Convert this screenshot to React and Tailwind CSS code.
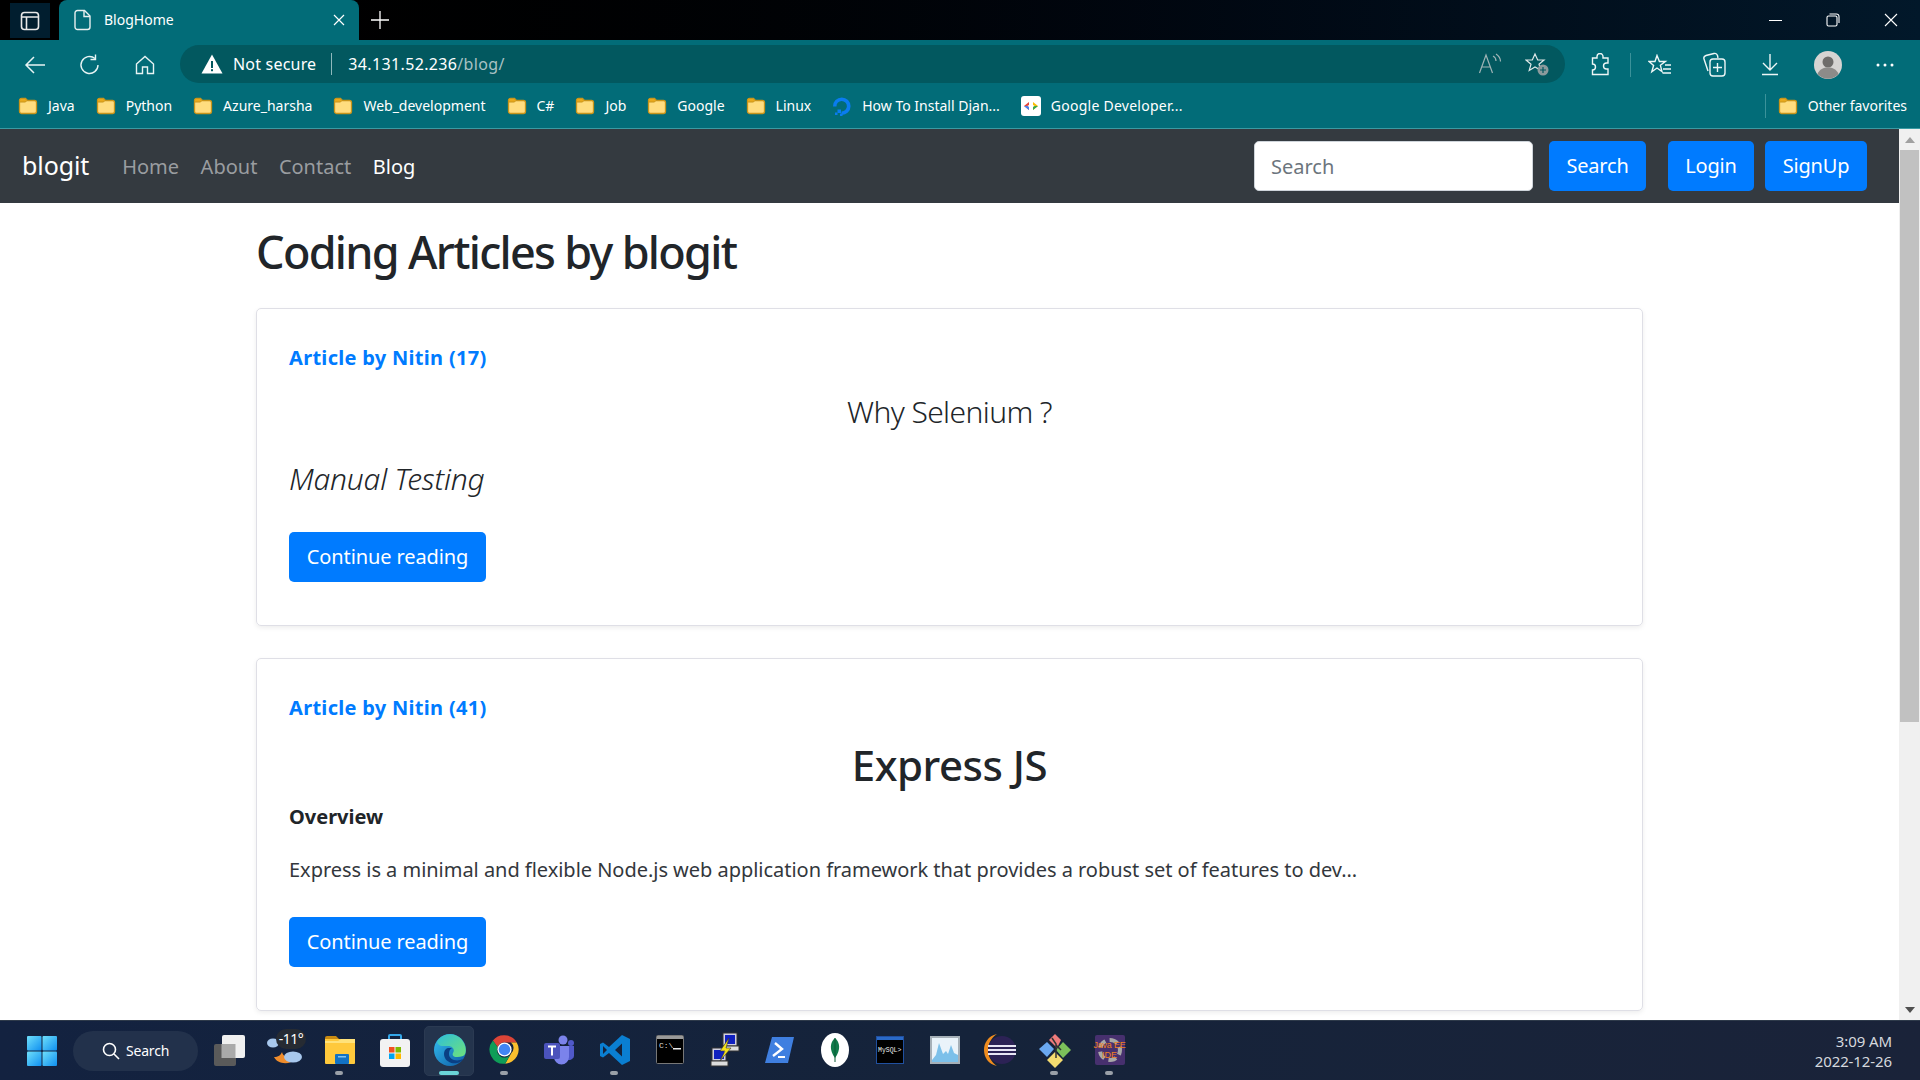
import React from "react";

const Folder = () => (
  <svg width="20" height="20" viewBox="0 0 20 20" className="shrink-0">
    <path d="M1.5 4.5a2 2 0 0 1 2-2h4l2 2h7a2 2 0 0 1 2 2v9a2 2 0 0 1-2 2h-13a2 2 0 0 1-2-2z" fill="#ffdd7f" stroke="#c8941a" strokeWidth="1.3" />
    <path d="M1.5 6V4a1.5 1.5 0 0 1 1.5-1.5h4l2 2-1.5 1.5z" fill="#e9a91c" stroke="#c8941a" strokeWidth="1" />
  </svg>
);

const Bm = ({ icon, children, t }) => (
  <div className="flex items-center gap-[10px] shrink-0">
    {icon || <Folder />}
    <span className={`text-[14px] leading-none text-white ${t || ""}`}>{children}</span>
  </div>
);

const Do = () => (
  <svg width="20" height="22" viewBox="0 0 20 22" className="shrink-0">
    <path d="M8 19.5v-3.6a5.2 5.2 0 1 0-5-5H-0.5A8.8 8.8 0 1 1 8 19.5z" transform="translate(1.5 0.5)" fill="#0a7cf0" />
    <rect x="5.5" y="14.5" width="3.5" height="3.5" fill="#0a7cf0" />
    <rect x="3" y="17.5" width="2.5" height="2.5" fill="#0a7cf0" />
    <rect x="8" y="18.5" width="2.5" height="2.5" fill="#0a7cf0" />
  </svg>
);

const Gd = () => (
  <svg width="20" height="24" viewBox="0 0 20 24" className="shrink-0">
    <rect y="2" width="20" height="20" rx="3" fill="#fff" />
    <path d="M8 8l-5 4 5 4v-3l-1.8-1L8 11z" fill="#e34336" />
    <path d="M3 12l5 4v-3l-1.8-1z" fill="#4285f4" />
    <path d="M12 8l5 4-5 4v-3l1.8-1L12 11z" fill="#fbbc04" />
    <path d="M17 12l-5 4v-3l1.8-1z" fill="#34a853" />
  </svg>
);

const Ico = ({ w = "w-[55px]", children }) => (
  <div className={`${w} h-[40px] flex items-center justify-center shrink-0`}>{children}</div>
);

const Task = ({ children, dot, active }) => (
  <div className="relative w-[55px] h-[60px] flex items-center justify-center shrink-0">
    {active && <div className="absolute left-[2px] top-[5px] w-[50px] h-[50px] rounded-[5px] bg-[#24344d] border border-[#2b3a52]" />}
    <div className="relative flex items-center justify-center -mt-[2px]">{children}</div>
    {dot && <div className="absolute left-[23px] top-[50px] w-[8px] h-[4px] rounded-full bg-[#9aa0a8]" />}
    {active && <div className="absolute left-[17px] top-[50px] w-[20px] h-[4px] rounded-full bg-[#6ad4d8]" />}
  </div>
);

const Card = ({ title, children, h }) => (
  <div className={`border border-[#dfdfe6] rounded-[5px] shadow-[0_2px_5px_rgba(0,0,0,0.07)] px-[32px] ${h}`}>
    <div className="pt-[34px] text-[20px] leading-[30px] font-bold text-[#007bff] tracking-[0.3px]">{title}</div>
    {children}
  </div>
);

const Btn = ({ children, cls }) => (
  <div className={`h-[50px] flex items-center justify-center rounded-[5px] bg-[#007bff] text-white text-[20px] ${cls}`}>{children}</div>
);

export default function App() {
  return (
    <div className="w-[1920px] h-[1080px] flex flex-col overflow-hidden bg-white font-['Noto_Sans',sans-serif]">
      {/* tab strip */}
      <div className="h-[40px] flex bg-gradient-to-r from-[#000000] to-[#02182a] shrink-0">
        <div className="ml-[10px] mt-[3px] w-[40px] h-[35px] bg-[#011e2f] flex items-center justify-center">
          <svg width="20" height="20" viewBox="0 0 20 20" fill="none" stroke="#e8e8e8" strokeWidth="1.6">
            <rect x="1.5" y="1.5" width="17" height="17" rx="3" />
            <path d="M1.5 6h17M6.5 6v12.5" />
          </svg>
        </div>
        <div className="ml-[9px] w-[300px] h-[40px] bg-[#026c78] rounded-t-[8px] flex items-center pl-[15px] pr-[14px]">
          <svg width="18" height="22" viewBox="0 0 18 22" fill="none" stroke="#e8f0f0" strokeWidth="1.4">
            <path d="M3.5 1.5h7l5.5 5.5v11a2.5 2.5 0 0 1-2.5 2.5h-10A2.5 2.5 0 0 1 1 18V4a2.5 2.5 0 0 1 2.5-2.5z" />
            <path d="M10 1.5V7.5h6" />
          </svg>
          <span className="ml-[12px] -mt-[2px] text-[14px] text-white flex-1">BlogHome</span>
          <svg width="12" height="12" viewBox="0 0 12 12" stroke="#fff" strokeWidth="1.2"><path d="M1 1l10 10M11 1L1 11" /></svg>
        </div>
        <div className="ml-[12px] flex items-center">
          <svg width="18" height="18" viewBox="0 0 18 18" stroke="#fff" strokeWidth="1.3"><path d="M9 0v18M0 9h18" /></svg>
        </div>
        <div className="ml-auto flex items-center text-white">
          <div className="w-[58px] flex justify-center"><div className="w-[13px] h-px bg-white" /></div>
          <div className="w-[58px] flex justify-center">
            <svg width="14" height="14" viewBox="0 0 14 14" fill="none" stroke="#fff" strokeWidth="1.1"><rect x="1" y="3" width="10" height="10" rx="1.5" /><path d="M3.5 1h7a2.5 2.5 0 0 1 2.5 2.5V10" /></svg>
          </div>
          <div className="w-[58px] flex justify-center">
            <svg width="14" height="14" viewBox="0 0 14 14" stroke="#fff" strokeWidth="1.1"><path d="M1 1l12 12M13 1L1 13" /></svg>
          </div>
        </div>
      </div>

      {/* toolbar */}
      <div className="h-[48px] bg-[#026c78] flex items-start shrink-0">
        <div className="pt-[5px] flex items-center">
          <Ico w="w-[62px] pl-[7px]">
            <svg width="22" height="20" viewBox="0 0 22 20" fill="none" stroke="#e8f4f4" strokeWidth="1.5"><path d="M21 10H2M10 2l-8 8 8 8" /></svg>
          </Ico>
          <Ico>
            <svg width="22" height="22" viewBox="0 0 22 22" fill="none" stroke="#e8f4f4" strokeWidth="1.4"><path d="M19 11a8.5 8.5 0 1 1-3-6.5" /><path d="M16.5 0.5v5h-5" /></svg>
          </Ico>
          <Ico>
            <svg width="20" height="20" viewBox="0 0 20 20" fill="none" stroke="#e8f4f4" strokeWidth="1.4"><path d="M1.5 9L10 1.5 18.5 9v9.5H12.5V12h-5v6.5H1.5z" /></svg>
          </Ico>
        </div>
        <div className="ml-[8px] mt-[5px] w-[1385px] h-[38px] rounded-full bg-[#02585f] flex items-center pl-[21px] shrink-0">
          <svg width="22" height="20" viewBox="0 0 22 20"><path d="M11 0.5L21.5 19.5H0.5z" fill="#fff" /><rect x="10" y="7" width="2" height="7" fill="#02585f" /><rect x="10" y="15.2" width="2" height="2" fill="#02585f" /></svg>
          <span className="ml-[10px] text-[16px] tracking-[0.2px] text-white">Not secure</span>
          <div className="ml-[15px] w-px h-[22px] bg-[#8fb9bc]" />
          <span className="ml-[16px] text-[16px] tracking-[0.35px] text-white">34.131.52.236<span className="text-[#a9c2c4]">/blog/</span></span>
          <div className="ml-auto flex items-center pr-[5px]">
            <Ico w="w-[45px]">
              <svg width="26" height="22" viewBox="0 0 26 22" fill="none" stroke="#9fb4b6" strokeWidth="1.2"><path d="M1.5 20L8 2l6.5 18M4 14h8" /><path d="M15 3c2 1 3 3 3 5M18 1c3 2 4.5 4.5 4.5 7.5" /></svg>
            </Ico>
            <Ico w="w-[47px]">
              <svg width="24" height="24" viewBox="0 0 24 24" fill="none" stroke="#dfe8e8" strokeWidth="1.2"><path d="M10 2l2.7 6h6.3l-5 4.2 1.8 6L10 15l-5.800 3.500 1.800-6.300-5-4.200h6.300z" /><circle cx="18" cy="18" r="5.500" fill="#8b9a9c" stroke="none" /><path d="M18 15v6M15 18h6" stroke="#02585f" /></svg>
            </Ico>
          </div>
        </div>
        <div className="pt-[5px] flex items-center">
          <Ico w="w-[70px]">
            <svg width="22" height="24" viewBox="0 0 22 24" fill="none" stroke="#eef6f6" strokeWidth="1.4"><path d="M8 3.500a3 3 0 0 1 6 0V5h5v5h-1.500a3 3 0 0 0 0 6H19v5.500H3.500V17a3 3 0 0 0 0-6V5H8z" /></svg>
          </Ico>
          <div className="w-px h-[24px] bg-[#3b929a] -ml-[5px]" />
          <Ico w="w-[58px]">
            <svg width="24" height="22" viewBox="0 0 24 22" fill="none" stroke="#eef6f6" strokeWidth="1.4"><path d="M9 1.500l2.400 6h6l-5 3.800 1.600 6.200L9 14l-5.200 3.800 1.800-6.300-4.600-4h6z" /><path d="M17 11h6M15 15h8M14.500 19h8.500" /></svg>
          </Ico>
          <Ico w="w-[52px]">
            <svg width="24" height="26" viewBox="0 0 24 26" fill="none" stroke="#eef6f6" strokeWidth="1.4"><path d="M5 19L1 7c-.5-1.500.5-3 2-3.500L11 1.500c1.500-.4 3 .4 3.500 2L15 6" /><rect x="7" y="7" width="15" height="17" rx="3" /><path d="M14.500 11v9M10 15.500h9" /></svg>
          </Ico>
          <Ico w="w-[58px]">
            <svg width="18" height="22" viewBox="0 0 18 22" fill="none" stroke="#eef6f6" strokeWidth="1.4"><path d="M9 0v16M2 9l7 7 7-7M1 20.500h16" /></svg>
          </Ico>
          <Ico w="w-[58px]">
            <svg width="28" height="28" viewBox="0 0 28 28"><circle cx="14" cy="14" r="14" fill="#d6d4d2" /><circle cx="14" cy="11" r="5.500" fill="#6e6c6a" /><path d="M3.500 23c2-5 6-6.500 10.500-6.500S22.500 18 24.500 23A14 14 0 0 1 3.500 23z" fill="#8d8b89" /></svg>
          </Ico>
          <Ico w="w-[56px]">
            <svg width="18" height="4" viewBox="0 0 18 4" fill="#fff"><circle cx="2" cy="2" r="1.500" /><circle cx="9" cy="2" r="1.500" /><circle cx="16" cy="2" r="1.500" /></svg>
          </Ico>
        </div>
      </div>

      {/* bookmarks */}
      <div className="h-[41px] bg-[#026c78] flex items-center pl-[18px] pr-[13px] gap-[21px] pb-[4px] border-b border-[#3a9aa3] shrink-0">
        <Bm>Java</Bm>
        <Bm>Python</Bm>
        <Bm>Azure_harsha</Bm>
        <Bm>Web_development</Bm>
        <Bm>C#</Bm>
        <Bm>Job</Bm>
        <Bm>Google</Bm>
        <Bm>Linux</Bm>
        <Bm icon={<Do />}>How To Install Djan...</Bm>
        <Bm icon={<Gd />} t="tracking-[0.25px]">Google Developer...</Bm>
        <div className="ml-auto flex items-center gap-[12px]">
          <div className="w-px h-[24px] bg-[#3b929a]" />
          <Bm>Other favorites</Bm>
        </div>
      </div>

      {/* page */}
      <div className="flex-1 flex min-h-0">
        <div className="flex-1 min-w-0 overflow-hidden">
          <nav className="h-[74px] bg-[#343a40] flex items-center pl-[22px] text-[20px]">
            <span className="text-[25px] text-white tracking-[-0.1px] mr-[33px]">blogit</span>
            <div className="flex gap-[21.5px] pt-[1px] text-[#9a9da0]">
              <span>Home</span>
              <span>About</span>
              <span>Contact</span>
              <span className="text-white">Blog</span>
            </div>
            <div className="ml-auto flex items-center pr-[32px]">
              <div className="w-[279px] h-[50px] bg-white border border-[#ced4da] rounded-[5px] flex items-center pl-[16px] pt-[2px] text-[#6c757d]">Search</div>
              <Btn cls="ml-[16px] w-[97px] tracking-[-0.2px]">Search</Btn>
              <Btn cls="ml-[22px] w-[86px] tracking-[-0.2px]">Login</Btn>
              <Btn cls="ml-[11px] w-[102px] tracking-[-0.2px]">SignUp</Btn>
            </div>
          </nav>
          <main className="pl-[256px] w-[1643px] text-[#212529]">
            <h1 className="h-[105px] flex items-center pb-[8px] text-[45px] font-medium tracking-[-1.7px] leading-none">Coding Articles by blogit</h1>
            <Card title="Article by Nitin (17)" h="h-[318px]">
              <div className="mt-[16px] h-[45px] text-center text-[30px] leading-[45px] font-light tracking-[-0.6px]">Why Selenium ?</div>
              <div className="mt-[22px] h-[45px] text-[30px] leading-[45px] italic font-light tracking-[-0.2px]">Manual Testing</div>
              <Btn cls="mt-[31px] w-[197px] tracking-[-0.1px]">Continue reading</Btn>
            </Card>
            <div className="h-[32px]" />
            <Card title="Article by Nitin (41)" h="h-[353px]">
              <div className="mt-[11px] h-[62px] flex items-center justify-center text-[42px] font-medium tracking-[-0.5px] leading-none">Express JS</div>
              <div className="mt-[6px] text-[20px] font-bold leading-[30px]">Overview</div>
              <div className="mt-[23px] text-[20px] leading-[30px] whitespace-nowrap tracking-[-0.03px] text-[#33373c]">Express is a minimal and flexible Node.js web application framework that provides a robust set of features to dev...</div>
              <Btn cls="mt-[32px] w-[197px] tracking-[-0.1px]">Continue reading</Btn>
            </Card>
          </main>
        </div>
        {/* scrollbar */}
        <div className="w-[21px] bg-[#f0f0f0] flex flex-col items-center shrink-0">
          <div className="h-[21px] flex items-center justify-center">
            <svg width="10" height="6" viewBox="0 0 10 6" fill="#a0a0a0"><path d="M5 0l5 6H0z" /></svg>
          </div>
          <div className="w-[19px] h-[572px] bg-[#c1c1c1]" />
          <div className="mt-auto h-[21px] flex items-center justify-center">
            <svg width="10" height="6" viewBox="0 0 10 6" fill="#505050"><path d="M0 0h10L5 6z" /></svg>
          </div>
        </div>
      </div>

      {/* taskbar */}
      <div className="h-[60px] bg-gradient-to-r from-[#132240] via-[#15233a] to-[#1a2339] border-t border-[#2e3a4a] flex items-center shrink-0 relative">
        <div className="ml-[27px] w-[30px] shrink-0">
          <svg width="30" height="30" viewBox="0 0 30 30">
            <defs><linearGradient id="win" x1="0" y1="0" x2="1" y2="1"><stop offset="0" stopColor="#6fe0fb" /><stop offset="1" stopColor="#0f8ff0" /></linearGradient></defs>
            <rect width="14.500" height="14.500" rx="1" fill="url(#win)" /><rect x="15.500" width="14.500" height="14.500" rx="1" fill="url(#win)" /><rect y="15.500" width="14.500" height="14.500" rx="1" fill="url(#win)" /><rect x="15.500" y="15.500" width="14.500" height="14.500" rx="1" fill="url(#win)" />
          </svg>
        </div>
        <div className="ml-[16px] w-[125px] h-[40px] rounded-full bg-[#22314b] flex items-center pl-[29px] gap-[6px] shrink-0">
          <svg width="18" height="18" viewBox="0 0 18 18" fill="none" stroke="#fff" strokeWidth="1.6"><circle cx="7.500" cy="7.500" r="6" /><path d="M12 12l5 5" /></svg>
          <span className="text-[14px] tracking-[-0.2px] text-white">Search</span>
        </div>
        <div className="ml-[4px] flex items-center">
          <Task>
            <svg width="32" height="32" viewBox="0 0 32 32"><rect x="0" y="10" width="22" height="22" rx="2" fill="#5a5a5a" /><rect x="8" y="1" width="23" height="23" rx="2" fill="#f0f0f0" /><rect x="7.500" y="10" width="14" height="14" fill="#aaa" /></svg>
          </Task>
          <Task>
            <div className="relative w-[40px] h-[40px] ml-[3px]">
              <svg width="40" height="40" viewBox="0 0 40 40" className="absolute left-0 top-0">
                <path d="M16 22c-1 3-4 5-8 5 3 7 16 9 22 1-7 1-13-1-14-6z" fill="#f08d2c" />
                <ellipse cx="27" cy="27" rx="9" ry="5.500" fill="#a8c8ee" />
                <ellipse cx="7" cy="13" rx="6" ry="4.500" fill="#a8c8ee" />
              </svg>
              <div className="absolute left-[10px] -top-[1px] w-[30px] h-[20px] rounded-full bg-[#262b33] flex items-center justify-center text-[14px] tracking-[-0.5px] text-white">-11°</div>
            </div>
          </Task>
          <Task dot>
            <svg width="32" height="30" viewBox="0 0 32 30"><path d="M1 3a2 2 0 0 1 2-2h9l3 3h-14z" fill="#c88a12" /><path d="M1 4h30v24a1 1 0 0 1-1 1H2a1 1 0 0 1-1-1z" fill="#ffc93c" /><path d="M1 6h13l3-2h14v4H1z" fill="#ffe27a" /><rect x="11" y="19" width="14" height="10" rx="1" fill="#1272c4" /><rect x="14" y="21" width="8" height="1.500" fill="#7fc4f4" /></svg>
          </Task>
          <Task>
            <svg width="30" height="34" viewBox="0 0 30 34">
              <path d="M9 6V3a1 1 0 0 1 1-1h10a1 1 0 0 1 1 1v3" fill="none" stroke="#35a7e8" strokeWidth="2" />
              <rect x="0" y="6" width="30" height="28" rx="3" fill="#f2f2f2" />
              <rect x="9" y="14" width="5.500" height="5.500" fill="#f25022" /><rect x="15.500" y="14" width="5.500" height="5.500" fill="#7fba00" /><rect x="9" y="20.500" width="5.500" height="5.500" fill="#00a4ef" /><rect x="15.500" y="20.500" width="5.500" height="5.500" fill="#ffb900" />
            </svg>
          </Task>
          <Task active>
            <svg width="32" height="32" viewBox="0 0 32 32">
              <defs>
                <linearGradient id="edgeA" x1="0" y1="0" x2="1" y2="1"><stop offset="0" stopColor="#35c1f1" /><stop offset="1" stopColor="#0c59a4" /></linearGradient>
                <linearGradient id="edgeB" x1="0" y1="0" x2="1" y2="1"><stop offset="0" stopColor="#2fbfd8" /><stop offset="1" stopColor="#6fe27a" /></linearGradient>
              </defs>
              <circle cx="16" cy="16" r="16" fill="url(#edgeA)" />
              <path d="M3 8C8-2 24-3 30 9c3 6 2 12-1 13-6 2-12 1-10-3 2-3 0-7-5-7-5 0-9 1-11-4z" fill="url(#edgeB)" />
              <path d="M14 14c-4 1-5 6-3 10 2 4 7 6 12 5 3-.500 5-2 6-4-6 3-14 1-14-5 0-3 1-5 3-6z" fill="#0a3f83" />
            </svg>
          </Task>
          <Task dot>
            <svg width="31" height="31" viewBox="0 0 48 48">
              <path d="M24 2a22 22 0 0 1 19 11H24a11 11 0 0 0-10.500 7.500L6 10a22 22 0 0 1 18-8z" fill="#db4437" />
              <path d="M43 13a22 22 0 0 1-18 33l10-17a11 11 0 0 0-1-16z" fill="#fbc02d" />
              <path d="M6 10a22 22 0 0 0 19 36l9-16a11 11 0 0 1-20.500-9.500z" fill="#0f9d58" />
              <circle cx="24" cy="24" r="11" fill="#fff" /><circle cx="24" cy="24" r="9" fill="#4285f4" />
            </svg>
          </Task>
          <Task>
            <svg width="31" height="30" viewBox="0 0 31 30">
              <circle cx="19" cy="5" r="4.500" fill="#7b83eb" /><circle cx="27" cy="8" r="3" fill="#5059c9" />
              <path d="M22 11h8v10a5 5 0 0 1-8 3z" fill="#5059c9" />
              <path d="M10 11h15v11a7 7 0 0 1-15 0z" fill="#7b83eb" />
              <rect x="0" y="8" width="16" height="16" rx="2" fill="#4b53bc" />
              <path d="M4 11.500h8M8 11.500v9" stroke="#fff" strokeWidth="2" />
            </svg>
          </Task>
          <Task dot>
            <svg width="32" height="32" viewBox="0 0 32 32">
              <path d="M23 1l8 4v22l-8 4-13-12-6 4.500-3-1.500V10l3-1.500 6 4.500z M23 9.500l-7 6.500 7 6.500z M4 12v8l4-4z" fill="#0a7fd2" fillRule="evenodd" />
            </svg>
          </Task>
          <Task>
            <svg width="28" height="29" viewBox="0 0 28 29"><rect x=".5" y=".5" width="27" height="28" rx="1" fill="#000" stroke="#777" /><rect x="1" y="1" width="26" height="3" fill="#999" />
              <text x="3" y="13" fontSize="8" fontFamily="Liberation Mono" fill="#ddd">C:\</text><rect x="17" y="13" width="8" height="1.500" fill="#eee" /></svg>
          </Task>
          <Task>
            <svg width="30" height="36" viewBox="0 0 30 36">
              <rect x="13" y="1" width="14" height="13" fill="#cfcfe0" stroke="#333" /><rect x="15" y="3" width="10" height="9" fill="#1020c0" /><rect x="13" y="14" width="16" height="5" fill="#ddd" stroke="#333" />
              <rect x="2" y="16" width="14" height="13" fill="#cfcfe0" stroke="#333" /><rect x="4" y="18" width="10" height="9" fill="#1020c0" /><rect x="1" y="29" width="17" height="5" fill="#ddd" stroke="#333" />
              <path d="M19 6L10 19h5l-5 10 11-13h-5z" fill="#f6e21a" stroke="#333" strokeWidth=".6" />
            </svg>
          </Task>
          <Task>
            <svg width="30" height="28" viewBox="0 0 30 28"><path d="M7 1h22L23 27H0z" fill="#3f7fe0" /><path d="M10 7l7 6-9 7" fill="none" stroke="#fff" strokeWidth="2.400" /><path d="M13 21h7" stroke="#fff" strokeWidth="2" /></svg>
          </Task>
          <Task>
            <svg width="28" height="34" viewBox="0 0 28 34"><ellipse cx="14" cy="17" rx="14" ry="17" fill="#fff" /><path d="M14 5c5 4 6 12 0 20-6-8-5-16 0-20z" fill="#0f7a4a" /><path d="M14 5v24" stroke="#0a5a35" strokeWidth="1" /></svg>
          </Task>
          <Task>
            <svg width="28" height="28" viewBox="0 0 28 28"><rect x=".5" y=".5" width="27" height="27" fill="#000" stroke="#2050a0" /><rect x="1" y="1" width="26" height="3" fill="#2a6ac8" />
              <text x="2" y="16" fontSize="6.500" fontFamily="Liberation Mono" fill="#eee">MySQL&gt;</text></svg>
          </Task>
          <Task>
            <svg width="30" height="28" viewBox="0 0 30 28"><rect width="30" height="28" fill="#a6b0b8" /><rect x="2" y="2" width="26" height="24" fill="#eaf3fa" /><path d="M2 24l4-5 3-12 4 11 3-3 2 3 3-9 3 8 4 2v7H2z" fill="#7cc0ea" /></svg>
          </Task>
          <Task>
            <svg width="32" height="34" viewBox="0 0 32 34"><path d="M13 1C4 3 0 10 0 17s4 14 13 16C7 29 4 23 4 17S7 5 13 1z" fill="#f08c1e" /><circle cx="18" cy="17" r="14" fill="#2c2255" /><path d="M4 13h28M4 17h28M4 21h28" stroke="#e8e6f4" strokeWidth="2" /></svg>
          </Task>
          <Task dot>
            <svg width="32" height="36" viewBox="0 0 32 36">
              <path d="M16 2l6 6-4 8-8-8z" fill="#ee7b7b" /><path d="M8 10l7 7-7 8-8-8z" fill="#6aa8f0" /><path d="M24 10l8 8-8 8-7-8z" fill="#7cc05a" /><path d="M16 20l8 8-8 8-8-8z" fill="#f4dc70" />
              <path d="M13 6l4 6v14M17 13l5 5" stroke="#333" strokeWidth="1.500" fill="none" />
            </svg>
          </Task>
          <Task dot>
            <div className="relative w-[30px] h-[30px] bg-[#47306e] rounded-[2px] flex flex-col items-center justify-center text-[9px] leading-[10px] font-['Liberation_Sans',sans-serif] text-[#f08020]">
              <div className="absolute left-[3px] top-[3px] w-[24px] h-[24px] rounded-full border-[4px] border-dashed border-[#a8a8a8]" />
              <span className="relative whitespace-nowrap tracking-[-0.2px]">Java EE</span>
              <span className="relative">IDE</span>
            </div>
          </Task>
        </div>
        <div className="ml-auto pr-[28px] text-right text-[15px] leading-[20px] text-[#d5d8de] tracking-[-0.1px]">
          <div>3:09 AM</div>
          <div>2022-12-26</div>
        </div>
      </div>
    </div>
  );
}
